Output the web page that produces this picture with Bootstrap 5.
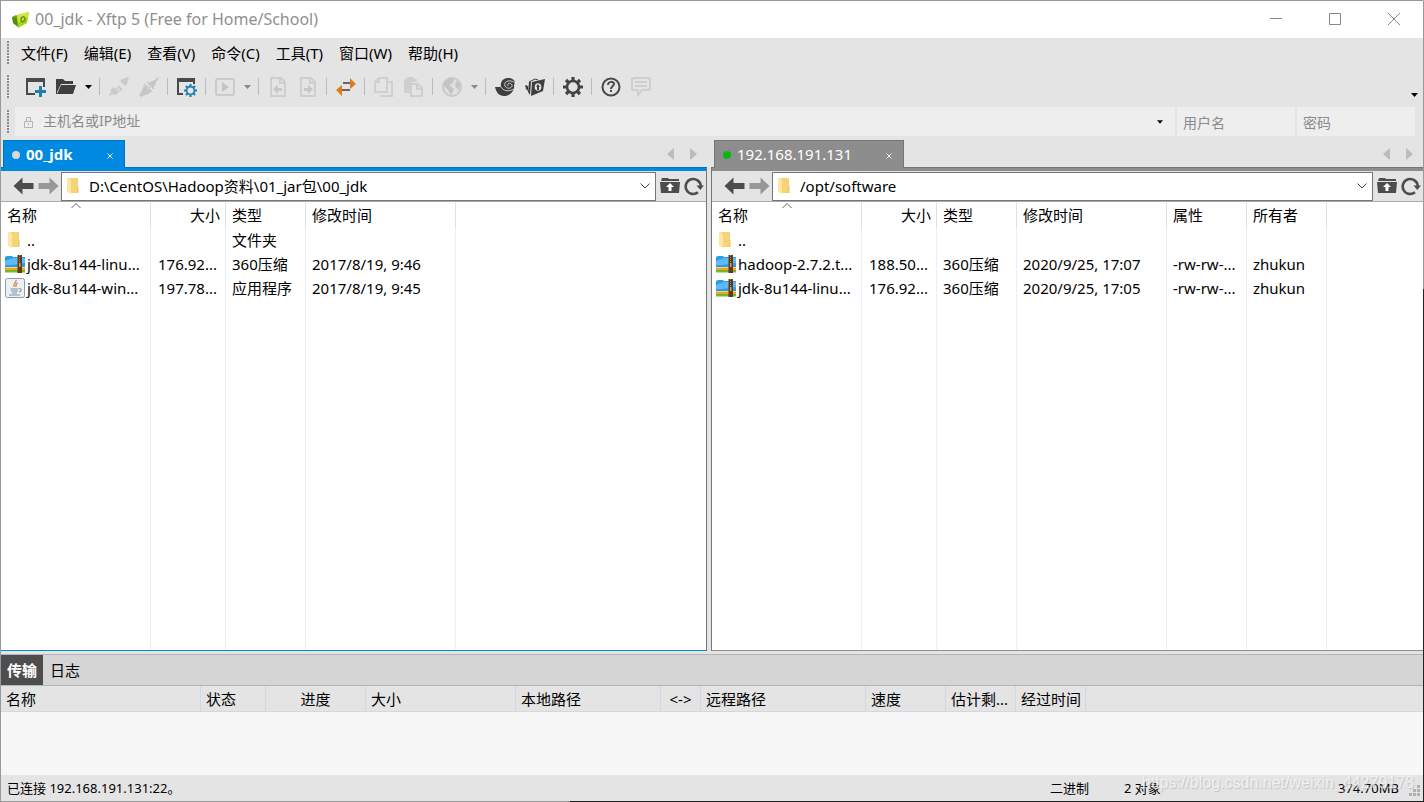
<!DOCTYPE html>
<html lang="zh-CN">
<head>
<meta charset="utf-8">
<meta name="viewport" content="width=device-width, initial-scale=1">
<title>00_jdk - Xftp 5 (Free for Home/School)</title>
<link href="https://cdn.jsdelivr.net/npm/bootstrap@5.3.0/dist/css/bootstrap.min.css" rel="stylesheet">
<script src="https://cdn.jsdelivr.net/npm/bootstrap@5.3.0/dist/js/bootstrap.bundle.min.js"></script>
<style>
  :root { --face: #e4e4e4; --accent: #0089e1; --muted: #8d8d8d; --line: #767676; }
  body { font-family: "Noto Sans", "Noto Sans CJK SC", sans-serif; font-size: 15px; line-height: 24px; color: #000; background: var(--face); }
  svg { display: block; flex: none; }
  button { border: 0; background: none; padding: 0; color: inherit; display: flex; align-items: center; justify-content: center; }
  a { color: inherit; text-decoration: none; }
  input { border: 0; background: none; padding: 0; min-width: 0; outline: 0; color: inherit; }
  .app-window { border: 1px solid #999; border-right-color: transparent; border-bottom: 0; background: linear-gradient(var(--face), var(--face)) padding-box, linear-gradient(#999 36%, #222 36%) border-box; }
  .window-edge { height: 1px; background: linear-gradient(90deg, #999 40%, #222 40%); }
  .titlebar { height: 37px; background: #fff; color: #8f8f8f; padding: 0 0 0 10px; }
  .titlebar h1 { font-size: 16px; font-weight: 400; line-height: 24px; padding-bottom: 1px; }
  .titlebar button { width: 59px; height: 37px; padding-bottom: 1px; }
  .grip { width: 2px; height: 24px; margin: 0 12px 0 6px; background: repeating-linear-gradient(#8a8a8a 0 2px, transparent 2px 3px); }
  .menubar { height: 31px; padding-bottom: 2px; }
  .menubar ul { gap: 16px; }
  .tools { height: 37px; padding-bottom: 2px; }
  .tools button { width: 30px; height: 30px; }
  .tools .arrow { width: 15px; }
  .tools .more { width: 18px; height: 18px; }
  .tools .sep { width: 8px; height: 17px; border-left: 1px solid #bbb; margin-left: 3px; margin-right: -3px; }
  .hostbar { height: 31px; padding: 0 8px 0 0; gap: 2px; }
  .hostbar .grip { margin-right: 4px; }
  .field { height: 29px; background: #eee; color: #8a8a8a; font-size: 14px; }
  .field input { font-size: 14px; line-height: 24px; padding-bottom: 2px; }
  .field::placeholder, .field input::placeholder { color: #8a8a8a; opacity: 1; }
  .field-host { padding: 0 8px; }
  .field-host svg { margin-right: 9px; }
  .field-host button svg { margin-right: 0; }
  .field-short { width: 118px; padding: 1px 6px 0; }
  .panes { gap: 4px; }
  .pane-left { flex: 706 1 0; }
  .pane-right { flex: 712 1 0; }
  .tabstrip { height: 31px; padding: 3px 10px 0 2px; border-bottom: 1px solid var(--tab-edge); }
  .pane-right .tabstrip { padding-left: 3px; }
  .doc-tab { height: 28px; margin-bottom: -1px; border: 1px solid var(--tab-edge); border-bottom: 0; background: var(--tab); color: #fff; padding: 0 11px 1px 8px; gap: 6px; }
  .doc-tab button { margin-left: 28px; padding-top: 3px; }
  .dot { width: 8px; height: 8px; margin-top: 2px; border-radius: 50%; background: var(--dot); }
  .pane-box { border-left: 1px solid var(--line); border-bottom: 1px solid var(--muted); }
  .pane-left { --tab: var(--accent); --tab-edge: #0074bd; --dot: #d8d8d8; }
  .pane-left .pane-box { border-left: 0; border-right: 1px solid var(--line); border-bottom-color: var(--accent); }
  .pane-right { --tab: #8d8d8d; --tab-edge: #757575; --dot: #0ab80f; }
  .band { height: 3px; background: var(--tab); }
  .pathbar { height: 31px; padding: 0 2px 0 12px; border-bottom: 1px solid #aaa; gap: 4px; }
  .nav-arrows { gap: 4px; margin-right: -2px; }
  .combo { height: 29px; border: 1px solid var(--line); background: #fff; padding: 0 5px 0 4px; gap: 7px; }
  .combo input { padding-bottom: 1px; }
  .pane-body { background: #fff; }
  .files { table-layout: fixed; border-collapse: separate; border-spacing: 0; }
  .files th, .queue th { font-weight: 400; }
  .files th, .files td { height: 24px; padding: 0 5px 0 6px; border-right: 1px solid #e6effb; white-space: nowrap; overflow: hidden; text-align: left; }
  .files th { height: 26px; border-color: #e0e0e0; position: relative; }
  .files th:last-child, .files td:last-child { border: 0; }
  .files td:first-child { padding: 0 0 0 4px; }
  .files td svg { margin-right: 2px; }
  .files .up-icon { margin-left: 2px; margin-right: 4px; }
  .files tr.rest td { height: auto; }
  .files .num { text-align: right; }
  .files td.num { padding-right: 8px; }
  .sort-mark { position: absolute; left: 70px; top: 1px; }
  .c150 { width: 150px; } .c75 { width: 75px; } .c80 { width: 80px; } .c200 { width: 200px; } .c65 { width: 65px; } .c100 { width: 100px; }
  .c145 { width: 145px; } .c40 { width: 40px; } .c165 { width: 165px; } .c70 { width: 70px; }
  .dock { margin-top: 3px; background: #f7f7f7; }
  .dock-tabs { height: 32px; background: #d5d5d5; border-top: 1px solid #b5b5b5; border-bottom: 1px solid #b5b5b5; }
  .dock-tabs button { padding: 0 6px 1px; height: 30px; }
  .dock-tabs .current { background: #4d4d4d; color: #fff; font-weight: 700; margin-right: 1px; }
  .queue { table-layout: fixed; border-collapse: separate; border-spacing: 0; background: var(--face); }
  .queue th { height: 26px; padding: 0 5px; border-right: 1px solid #cfd8e3; border-bottom: 1px solid #cfd8e3; white-space: nowrap; overflow: hidden; text-align: left; }
  .queue th:last-child { border-right: 0; }
  .queue-body { height: 63px; }
  .status { height: 26px; font-size: 13px; padding: 0 3px 0 6px; }
  .s-mode { width: 74px; } .s-count { width: 214px; } .s-size { width: 63px; overflow: hidden; white-space: nowrap; }
  .s-grip { margin-left: 8px; margin-top: 4px; }
  .stamp { position: absolute; right: 9px; bottom: 7px; font: 16px/24px "Liberation Sans", sans-serif; color: #f4f4f4; text-shadow: 1px 1px 1px #bbb; opacity: .8; pointer-events: none; }
</style>
</head>
<body>
<svg width="0" height="0" class="position-absolute" aria-hidden="true">
  <defs>
    <symbol id="i-folder" viewBox="0 0 16 18"><path fill="#f5d477" d="M3 1h9v15H5z"/><path fill="#ecc765" d="M11 9h1.500v7H11z"/><path fill="#ffe7a3" d="M1 1h2l2 2v14l-4-2z"/></symbol>
    <symbol id="i-zip" viewBox="0 0 20 18"><path fill="#2d9bea" d="M0 2l2-1h5l1 1h12v9H0z"/><path fill="#5bbcf7" d="M0 6l8-3h12v7H0z"/><path fill="#2d9bea" d="M0 11l20-3v4H0z"/><path fill="#f7a21b" d="M0 12.500h20V15H0z"/><path fill="#72b82d" d="M0 15h20v2.500H0z"/><path fill="#63381d" d="M12.500 0h4.500v18h-4.500z"/><path stroke="#b8844b" stroke-dasharray="1 1" d="M14.500 0v9"/><path fill="#d9a23a" d="M14 8h1.500v4H14z"/></symbol>
    <symbol id="i-java" viewBox="0 0 20 20"><rect x=".5" y=".5" width="19" height="19" rx="2" fill="#eef1f4" stroke="#8b9cab"/><path fill="none" stroke="#e07a45" stroke-width="1.300" d="M11 2c1 3-4 4-2 7M13 5c-3 1-2 3-2 4"/><path fill="none" stroke="#7b93aa" stroke-width="1.100" d="M5.500 11h8M6 13h7M7 15h5M4 17h11M14 11c3-1 3 2 0 3"/></symbol>
    <symbol id="i-back" viewBox="0 0 20 18"><path fill="currentColor" d="M0 9L9 .500V6h11v6H9v5.500z"/></symbol>
    <symbol id="i-up" viewBox="0 0 20 18"><path fill="#4d4d4d" d="M2 1h6l1 1h10v2H1z"/><path fill="#4d4d4d" d="M0 5h20l-1 11H1z"/><path fill="#fff" d="M10 6l4 4h-2.500v4h-3v-4H6z"/></symbol>
    <symbol id="i-reload" viewBox="0 0 20 20"><path fill="none" stroke="#4d4d4d" stroke-width="2.600" d="M14 16.300A7.500 7.500 0 1 1 16.700 10"/><path fill="#4d4d4d" d="M12.500 9.500H20l-3.700 4.500z"/></symbol>
    <symbol id="i-chev" viewBox="0 0 10 6"><path fill="none" stroke="#444" d="M.5.500L5 5 9.500.500"/></symbol>
    <symbol id="i-drop" viewBox="0 0 7 4"><path fill="currentColor" d="M0 0h7L3.500 4z"/></symbol>
    <symbol id="i-x" viewBox="0 0 6 6"><path stroke="#fff" d="M.5.500l5 5M5.500.500l-5 5"/></symbol>
    <symbol id="i-left" viewBox="0 0 7 12"><path fill="#bcbcbc" d="M7 0v12L0 6z"/></symbol>
    <symbol id="i-right" viewBox="0 0 7 12"><path fill="#bcbcbc" d="M0 0v12l7-6z"/></symbol>
    <symbol id="i-gear" viewBox="0 0 20 20"><circle cx="10" cy="10" r="6" fill="none" stroke="currentColor" stroke-width="2.600"/><path stroke="currentColor" stroke-width="3.200" d="M10 0v4M10 16v4M0 10h4M16 10h4M3 3l2.700 2.700M14.300 14.300L17 17M3 17l2.700-2.700M14.300 5.700L17 3"/></symbol>
  </defs>
</svg>

<div class="app-window d-flex flex-column min-vh-100 position-relative">
  <header class="titlebar d-flex align-items-center">
    <svg width="20" height="18" viewBox="0 0 20 18" class="me-1"><path fill="#6ba312" d="M1 6l4-2 3 2v9l-5-2z"/><path fill="#4f8c10" d="M1 6l1 6 5 4V8z"/><path fill="#a8d31c" d="M6 4l12-3-2 11-9 5z"/><path fill="#cfe63a" d="M6 4l12-3-1 5-10 6z"/><path fill="none" stroke="#5c9410" stroke-width="1.500" d="M10 9c0-4 4-4 4-1s-4 4-4 1z"/></svg>
    <h1 class="mb-0 flex-grow-1">00_jdk - Xftp 5 (Free for Home/School)</h1>
    <button aria-label="最小化"><svg width="12" height="12"><path stroke="#888" d="M0 5.500h12"/></svg></button>
    <button aria-label="最大化"><svg width="12" height="12"><path fill="none" stroke="#888" d="M.5.500h11v11H.5z"/></svg></button>
    <button aria-label="关闭"><svg width="12" height="12"><path stroke="#888" d="M0 0l12 12M12 0L0 12"/></svg></button>
  </header>

  <nav class="menubar d-flex align-items-center">
    <span class="grip"></span>
    <ul class="list-unstyled d-flex mb-0">
      <li><a href="#">文件(F)</a></li><li><a href="#">编辑(E)</a></li><li><a href="#">查看(V)</a></li><li><a href="#">命令(C)</a></li><li><a href="#">工具(T)</a></li><li><a href="#">窗口(W)</a></li><li><a href="#">帮助(H)</a></li>
    </ul>
  </nav>

  <div class="tools d-flex align-items-center" role="toolbar">
    <span class="grip"></span>
    <button aria-label="新建"><svg width="20" height="20" viewBox="0 0 20 20"><path fill="#4a4a4a" d="M0 1h19v9h-2V5H2v11h7v2H0z"/><path fill="#1b7fb0" d="M13 9h3v4h4v3h-4v4h-3v-4H9v-3h4z"/></svg></button>
    <button aria-label="打开"><svg width="20" height="20" viewBox="0 0 20 20"><path fill="#3f3f3f" d="M0 2h7l2 2h8v3H5L1 15v2H0z"/><path fill="#3f3f3f" d="M5 8h15l-3 9H1z"/></svg></button>
    <button class="arrow" aria-label="打开列表"><svg width="7" height="4"><use href="#i-drop"/></svg></button>
    <span class="sep"></span>
    <button aria-label="连接"><svg width="20" height="20" viewBox="0 0 20 20" fill="#cacaca"><path d="M11 4l5 5 2-2 1-4 1-1-2-2-1 1-4 1zM2 12l3-2 5 5-3 3-4-1-2 2-1-1 2-3z"/><path fill="none" stroke="#cacaca" stroke-width="2" d="M8 12l3-3M10 14l3-3"/></svg></button>
    <button aria-label="断开"><svg width="20" height="20" viewBox="0 0 20 20" fill="#c6c6c6"><path d="M0 18l3-4 1-4 3-1 5 5-2 3-4 1-4 2zM9 6l4-2 3-1 3-3 1 1-3 4-1 3-2 3z"/><path stroke="#c6c6c6" stroke-width="1.500" d="M5 7l8 8M8 5l7 7"/><path stroke="#d2d2d2" stroke-width="3" d="M8 12l4-4"/></svg></button>
    <span class="sep"></span>
    <button aria-label="属性"><svg width="20" height="20" viewBox="0 0 20 20"><path fill="#4a4a4a" d="M0 1h18v6h-2V5H2v11h4v2H0z"/><svg x="7" y="7" width="13" height="13" color="#1b7fb0"><use href="#i-gear"/></svg></svg></button>
    <span class="sep"></span>
    <button aria-label="运行"><svg width="20" height="20" viewBox="0 0 20 20"><rect x="1" y="2" width="18" height="16" rx="2" fill="none" stroke="#cbcbcb" stroke-width="2"/><path fill="#c4c4c4" d="M7 5l7 5-7 5z"/></svg></button>
    <button class="arrow" aria-label="运行列表"><svg width="7" height="4" color="#888"><use href="#i-drop"/></svg></button>
    <span class="sep"></span>
    <button aria-label="向左传输"><svg width="20" height="20" viewBox="0 0 20 20"><path fill="none" stroke="#cecece" stroke-width="2" d="M3 1h10l4 4v14H3zM12 1v5h5"/><path fill="#c6c6c6" d="M5 12l5-4v3h4v3h-4v3z"/></svg></button>
    <button aria-label="向右传输"><svg width="20" height="20" viewBox="0 0 20 20"><path fill="none" stroke="#cecece" stroke-width="2" d="M3 1h10l4 4v14H3zM12 1v5h5"/><path fill="#c6c6c6" d="M15 12l-5-4v3H6v3h4v3z"/></svg></button>
    <span class="sep"></span>
    <button aria-label="传输"><svg width="20" height="18" viewBox="0 0 20 18"><path fill="#e07b1a" d="M14 0l6 6-6 5zM6 7v11l-6-6z"/><path fill="#666" d="M7 4h7v2H7zM6 11h8v2H6z"/></svg></button>
    <span class="sep"></span>
    <button aria-label="复制"><svg width="20" height="20" viewBox="0 0 20 20"><path fill="none" stroke="#cfcfcf" stroke-width="2" d="M5 1h8v14H1V5zM5 1v4H1M14 5h4v14H6"/></svg></button>
    <button aria-label="粘贴"><svg width="20" height="20" viewBox="0 0 20 20"><path fill="#cfcfcf" d="M0 2h3V0h7v2h3v3H7v11H0z"/><path fill="#e4e4e4" stroke="#cfcfcf" stroke-width="2" d="M7 7h7l4 4v8H7zM13 7v5h5"/></svg></button>
    <span class="sep"></span>
    <button aria-label="语言"><svg width="20" height="20" viewBox="0 0 20 20"><circle cx="10" cy="10" r="9" fill="#e0e0e0" stroke="#cacaca" stroke-width="2"/><path fill="#c4c4c4" d="M2 5l5-4 5 1-1 4-4 2 5 4-3 6-3-5-4-4zM14 4l4 3-1 7-4-5z"/></svg></button>
    <button class="arrow" aria-label="语言列表"><svg width="7" height="4" color="#888"><use href="#i-drop"/></svg></button>
    <span class="sep"></span>
    <button aria-label="Xshell"><svg width="20" height="18" viewBox="0 0 20 18"><path fill="#3f3f3f" d="M0 9h6C5 4 8 0 13 0c4 0 7 2 7 5l-1 2c1 6-4 11-10 11C4 18 1 14 0 9z"/><path fill="none" stroke="#ccc" stroke-width="1" d="M20 5c-4-4-12-2-10 3 2 4 8 2 7-1-1-3-5-2-4 1M6 9c2 4 8 5 13 2"/></svg></button>
    <button aria-label="Xftp"><svg width="20" height="20" viewBox="0 0 20 20"><path fill="#3f3f3f" d="M7 5l13-3-2 12-12 5zM0 8l3 1v5l-2-2zM4 5h2l-1 13-2-3z"/><path fill="none" stroke="#3f3f3f" d="M4 5l6-3 3 1"/><ellipse cx="13" cy="10" rx="3.300" ry="3.800" fill="#e4e4e4"/><path fill="#3f3f3f" d="M13 7l2 3h-1v3h-2v-3h-1z"/></svg></button>
    <span class="sep"></span>
    <button aria-label="选项"><svg width="20" height="20" color="#444"><use href="#i-gear"/></svg></button>
    <span class="sep"></span>
    <button aria-label="帮助"><svg width="20" height="20" viewBox="0 0 20 20" fill="none" stroke="#484848" stroke-width="2"><circle cx="10" cy="10" r="8.500"/><path d="M7 8c0-4 6-4 6-1 0 2-3 2-3 5M10 13v2"/></svg></button>
    <button aria-label="反馈"><svg width="20" height="20" viewBox="0 0 20 20" fill="none" stroke="#cecece" stroke-width="2"><path d="M3 1h14q2 0 2 2v8q0 2-2 2h-6l-4 5v-5H3q-2 0-2-2V3q0-2 2-2zM4 5h12M4 9h12"/></svg></button>
    <button class="more ms-auto align-self-end" aria-label="更多"><svg width="7" height="4"><use href="#i-drop"/></svg></button>
  </div>

  <form class="hostbar d-flex align-items-center">
    <span class="grip"></span>
    <div class="field field-host d-flex align-items-center flex-grow-1">
      <svg width="11" height="12" viewBox="0 0 11 12"><path fill="none" stroke="#b5b5b5" d="M1.500 5.500h8v6h-8zM3.500 5V1.500h4V5M5.500 7v2"/></svg>
      <input class="flex-grow-1" aria-label="主机" placeholder="主机名或IP地址">
      <button type="button" class="px-1" aria-label="主机列表"><svg width="6" height="4" color="#000"><use href="#i-drop"/></svg></button>
    </div>
    <input class="field field-short" aria-label="用户名" placeholder="用户名">
    <input class="field field-short" type="password" aria-label="密码" placeholder="密码">
  </form>

  <main class="panes d-flex flex-grow-1">
    <section class="pane-left d-flex flex-column">
      <div class="tabstrip d-flex align-items-center">
        <div class="doc-tab d-flex align-items-center"><span class="dot"></span><a href="#" class="fw-bold">00_jdk</a><button aria-label="关闭标签"><svg width="6" height="6"><use href="#i-x"/></svg></button></div>
        <button class="ms-auto" aria-label="上一个"><svg width="7" height="12"><use href="#i-left"/></svg></button>
        <button class="ms-3" aria-label="下一个"><svg width="7" height="12"><use href="#i-right"/></svg></button>
      </div>
      <div class="pane-box d-flex flex-column flex-grow-1">
        <div class="band"></div>
        <div class="pathbar d-flex align-items-center">
          <div class="nav-arrows d-flex">
            <button aria-label="后退"><svg width="21" height="18" color="#4d4d4d"><use href="#i-back"/></svg></button>
            <button aria-label="前进"><svg width="21" height="18" viewBox="0 0 20 18"><path fill="#979797" d="M20 9L11 .500V6H0v6h11v5.500z"/></svg></button>
          </div>
          <div class="combo d-flex align-items-center flex-grow-1">
            <svg width="16" height="18"><use href="#i-folder"/></svg>
            <input class="flex-grow-1" aria-label="本地路径" value="D:\CentOS\Hadoop资料\01_jar包\00_jdk">
            <button aria-label="路径列表"><svg width="10" height="6"><use href="#i-chev"/></svg></button>
          </div>
          <button aria-label="上级目录"><svg width="20" height="18"><use href="#i-up"/></svg></button>
          <button aria-label="刷新"><svg width="20" height="20"><use href="#i-reload"/></svg></button>
        </div>
        <div class="pane-body flex-grow-1 d-flex">
          <table class="files w-100 h-auto">
            <colgroup><col class="c150"><col class="c75"><col class="c80"><col class="c150"><col></colgroup>
            <thead><tr><th>名称<svg class="sort-mark" width="10" height="6" viewBox="0 0 10 6"><path fill="none" stroke="#666" d="M.5 5L5 .500 9.500 5"/></svg></th><th class="num">大小</th><th>类型</th><th>修改时间</th><th></th></tr></thead>
            <tbody>
              <tr><td><div class="d-flex align-items-center"><svg width="16" height="18" class="up-icon"><use href="#i-folder"/></svg>..</div></td><td></td><td>文件夹</td><td></td><td></td></tr>
              <tr><td><div class="d-flex align-items-center"><svg width="20" height="18"><use href="#i-zip"/></svg>jdk-8u144-linu...</div></td><td class="num">176.92...</td><td>360压缩</td><td>2017/8/19, 9:46</td><td></td></tr>
              <tr><td><div class="d-flex align-items-center"><svg width="20" height="20"><use href="#i-java"/></svg>jdk-8u144-win...</div></td><td class="num">197.78...</td><td>应用程序</td><td>2017/8/19, 9:45</td><td></td></tr>
              <tr class="rest"><td></td><td></td><td></td><td></td><td></td></tr>
            </tbody>
          </table>
        </div>
      </div>
    </section>

    <section class="pane-right d-flex flex-column">
      <div class="tabstrip d-flex align-items-center">
        <div class="doc-tab d-flex align-items-center"><span class="dot"></span><a href="#">192.168.191.131</a><button aria-label="关闭标签"><svg width="6" height="6"><use href="#i-x"/></svg></button></div>
        <button class="ms-auto" aria-label="上一个"><svg width="7" height="12"><use href="#i-left"/></svg></button>
        <button class="ms-3" aria-label="下一个"><svg width="7" height="12"><use href="#i-right"/></svg></button>
      </div>
      <div class="pane-box d-flex flex-column flex-grow-1">
        <div class="band"></div>
        <div class="pathbar d-flex align-items-center">
          <div class="nav-arrows d-flex">
            <button aria-label="后退"><svg width="21" height="18" color="#4d4d4d"><use href="#i-back"/></svg></button>
            <button aria-label="前进"><svg width="21" height="18" viewBox="0 0 20 18"><path fill="#979797" d="M20 9L11 .500V6H0v6h11v5.500z"/></svg></button>
          </div>
          <div class="combo d-flex align-items-center flex-grow-1">
            <svg width="16" height="18"><use href="#i-folder"/></svg>
            <input class="flex-grow-1" aria-label="远程路径" value="/opt/software">
            <button aria-label="路径列表"><svg width="10" height="6"><use href="#i-chev"/></svg></button>
          </div>
          <button aria-label="上级目录"><svg width="20" height="18"><use href="#i-up"/></svg></button>
          <button aria-label="刷新"><svg width="20" height="20"><use href="#i-reload"/></svg></button>
        </div>
        <div class="pane-body flex-grow-1 d-flex">
          <table class="files w-100 h-auto">
            <colgroup><col class="c150"><col class="c75"><col class="c80"><col class="c150"><col class="c80"><col class="c80"><col></colgroup>
            <thead><tr><th>名称<svg class="sort-mark" width="10" height="6" viewBox="0 0 10 6"><path fill="none" stroke="#666" d="M.5 5L5 .500 9.500 5"/></svg></th><th class="num">大小</th><th>类型</th><th>修改时间</th><th>属性</th><th>所有者</th><th></th></tr></thead>
            <tbody>
              <tr><td><div class="d-flex align-items-center"><svg width="16" height="18" class="up-icon"><use href="#i-folder"/></svg>..</div></td><td></td><td></td><td></td><td></td><td></td><td></td></tr>
              <tr><td><div class="d-flex align-items-center"><svg width="20" height="18"><use href="#i-zip"/></svg>hadoop-2.7.2.t...</div></td><td class="num">188.50...</td><td>360压缩</td><td>2020/9/25, 17:07</td><td>-rw-rw-...</td><td>zhukun</td><td></td></tr>
              <tr><td><div class="d-flex align-items-center"><svg width="20" height="18"><use href="#i-zip"/></svg>jdk-8u144-linu...</div></td><td class="num">176.92...</td><td>360压缩</td><td>2020/9/25, 17:05</td><td>-rw-rw-...</td><td>zhukun</td><td></td></tr>
              <tr class="rest"><td></td><td></td><td></td><td></td><td></td><td></td><td></td></tr>
            </tbody>
          </table>
        </div>
      </div>
    </section>
  </main>

  <section class="dock">
    <div class="dock-tabs d-flex"><button class="current">传输</button><button>日志</button></div>
    <table class="queue w-100">
      <colgroup><col class="c200"><col class="c65"><col class="c100"><col class="c150"><col class="c145"><col class="c40"><col class="c165"><col class="c80"><col class="c70"><col class="c70"><col></colgroup>
      <thead><tr><th>名称</th><th>状态</th><th class="text-center">进度</th><th>大小</th><th>本地路径</th><th class="text-center">&lt;-&gt;</th><th>远程路径</th><th>速度</th><th>估计剩...</th><th>经过时间</th><th></th></tr></thead>
    </table>
    <div class="queue-body"></div>
  </section>

  <footer class="status d-flex align-items-center">
    <span class="me-auto">已连接 192.168.191.131:22。</span>
    <span class="s-mode">二进制</span><span class="s-count">2 对象</span><span class="s-size">374.70MB</span>
    <svg class="s-grip" width="11" height="11" fill="#b0b0b0"><path d="M8 0h3v3H8zM4 4h3v3H4zM8 4h3v3H8zM0 8h3v3H0zM4 8h3v3H4zM8 8h3v3H8z"/></svg>
  </footer>
  <div class="window-edge"></div>
  <div class="stamp">https://blog.csdn.net/weixin_44279178</div>
</div>
</body>
</html>
